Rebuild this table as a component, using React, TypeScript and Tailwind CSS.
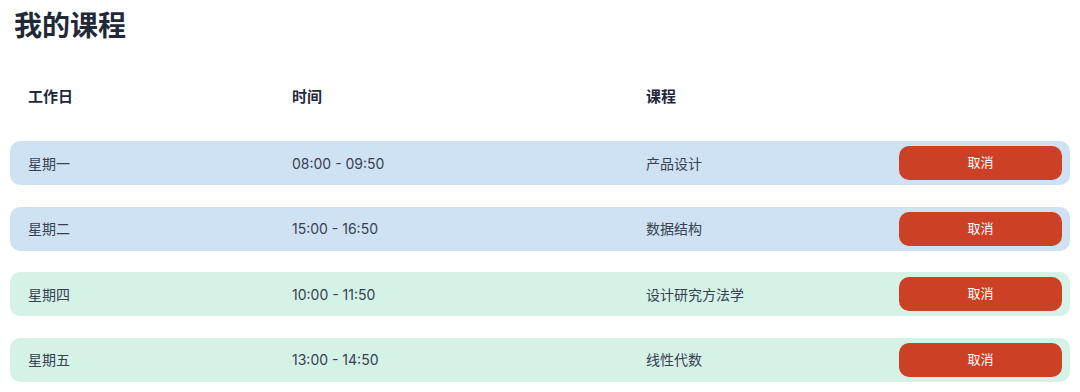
const courses = [
  { day: "星期一", time: "08:00 - 09:50", name: "产品设计", tone: "blue" },
  { day: "星期二", time: "15:00 - 16:50", name: "数据结构", tone: "blue" },
  { day: "星期四", time: "10:00 - 11:50", name: "设计研究方法学", tone: "green" },
  { day: "星期五", time: "13:00 - 14:50", name: "线性代数", tone: "green" },
];

const font = "font-['Inter','Noto_Sans_CJK_SC',sans-serif]";

export default function App() {
  return (
    <div className={`${font} bg-white w-[1080px] h-[392px] px-[10px] pt-[8px]`}>
      <h1 className="ml-[4px] text-[28px] leading-[36px] font-bold text-[#1f2937]">我的课程</h1>

      <div className="mt-[31px] grid grid-cols-[264px_354px_1fr_163px] items-center h-[44px] pl-[18px] pr-[8px] text-[15px] font-bold text-[#1e293b]">
        <div>工作日</div>
        <div>时间</div>
        <div>课程</div>
        <div />
      </div>

      <div className="mt-[22px] flex flex-col gap-[21.5px]">
        {courses.map((c) => (
          <div
            key={c.day}
            className={`grid grid-cols-[264px_354px_1fr_163px] items-center h-[44px] rounded-[10px] pl-[18px] pr-[8px] text-[14px] text-[#374151] ${
              c.tone === "blue" ? "bg-[#cfe2f3]" : "bg-[#d5f2e6]"
            }`}
          >
            <div>{c.day}</div>
            <div>{c.time}</div>
            <div>{c.name}</div>
            <button
              type="button"
              className="h-[34px] w-[163px] rounded-[10px] bg-[#cc4125] text-white text-[13px]"
            >
              取消
            </button>
          </div>
        ))}
      </div>
    </div>
  );
}
